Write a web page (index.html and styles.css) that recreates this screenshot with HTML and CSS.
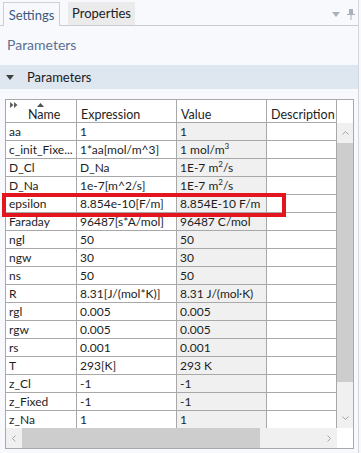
FILE: index.html
```html
<!DOCTYPE html>
<html lang="en">
<head>
    <meta charset="UTF-8">
    <title>Settings - Parameters</title>
    <link rel="stylesheet" href="styles.css">
</head>
<body>
    <div class="panel">
        <div class="tabbar">
            <div class="tab active">Settings</div>
            <div class="tab">Properties</div>
            <div class="tab-tools">
                <svg width="8" height="5" viewBox="0 0 8 5"><path d="M0 0H8L4 5Z" fill="#aab0ba"/></svg>
                <svg width="8" height="11" viewBox="0 0 8 11"><path d="M2 0H6V5H8V6H4.5V11H3.5V6H0V5H2Z" fill="#aab0ba"/></svg>
            </div>
        </div>

        <div class="title">Parameters</div>

        <div class="section">
            <svg class="caret" width="8" height="5" viewBox="0 0 8 5"><path d="M0 0H8L4 5Z" fill="#404040"/></svg>
            Parameters
        </div>

        <div class="grid">
            <div class="grid-main">
                <div class="grid-table">
                    <div class="row head">
                        <div class="cell name-head">
                            <svg class="expand-icon" width="8" height="6" viewBox="0 0 8 6"><path d="M0 0L3.5 3L0 6ZM4 0L7.5 3L4 6Z" fill="#606060"/></svg>
                            <svg class="sort-icon" width="7" height="4" viewBox="0 0 7 4"><path d="M0 4L3.5 0L7 4Z" fill="#505050"/></svg>
                            Name
                        </div>
                        <div class="cell">Expression</div>
                        <div class="cell">Value</div>
                        <div class="cell">Description</div>
                    </div>
                    <div class="row"><div class="cell">aa</div><div class="cell">1</div><div class="cell val">1</div><div class="cell"></div></div>
                    <div class="row"><div class="cell">c_init_Fixe...</div><div class="cell">1*aa[mol/m^3]</div><div class="cell val">1 mol/m<sup>3</sup></div><div class="cell"></div></div>
                    <div class="row"><div class="cell">D_Cl</div><div class="cell">D_Na</div><div class="cell val">1E-7 m<sup>2</sup>/s</div><div class="cell"></div></div>
                    <div class="row"><div class="cell">D_Na</div><div class="cell">1e-7[m^2/s]</div><div class="cell val">1E-7 m<sup>2</sup>/s</div><div class="cell"></div></div>
                    <div class="row"><div class="cell">epsilon</div><div class="cell">8.854e-10[F/m]</div><div class="cell val">8.854E-10 F/m</div><div class="cell"></div></div>
                    <div class="row"><div class="cell">Faraday</div><div class="cell">96487[s*A/mol]</div><div class="cell val">96487 C/mol</div><div class="cell"></div></div>
                    <div class="row"><div class="cell">ngl</div><div class="cell">50</div><div class="cell val">50</div><div class="cell"></div></div>
                    <div class="row"><div class="cell">ngw</div><div class="cell">30</div><div class="cell val">30</div><div class="cell"></div></div>
                    <div class="row"><div class="cell">ns</div><div class="cell">50</div><div class="cell val">50</div><div class="cell"></div></div>
                    <div class="row"><div class="cell">R</div><div class="cell">8.31[J/(mol*K)]</div><div class="cell val">8.31 J/(mol·K)</div><div class="cell"></div></div>
                    <div class="row"><div class="cell">rgl</div><div class="cell">0.005</div><div class="cell val">0.005</div><div class="cell"></div></div>
                    <div class="row"><div class="cell">rgw</div><div class="cell">0.005</div><div class="cell val">0.005</div><div class="cell"></div></div>
                    <div class="row"><div class="cell">rs</div><div class="cell">0.001</div><div class="cell val">0.001</div><div class="cell"></div></div>
                    <div class="row"><div class="cell">T</div><div class="cell">293[K]</div><div class="cell val">293 K</div><div class="cell"></div></div>
                    <div class="row"><div class="cell">z_Cl</div><div class="cell">-1</div><div class="cell val">-1</div><div class="cell"></div></div>
                    <div class="row"><div class="cell">z_Fixed</div><div class="cell">-1</div><div class="cell val">-1</div><div class="cell"></div></div>
                    <div class="row"><div class="cell">z_Na</div><div class="cell">1</div><div class="cell val">1</div><div class="cell"></div></div>
                </div>

                <div class="vscroll">
                    <div class="vs-track">
                        <div class="sb-btn"><svg width="7" height="4" viewBox="0 0 7 4"><path d="M0.5 3.5L3.5 0.5L6.5 3.5" fill="none" stroke="#a6a6a6"/></svg></div>
                        <div class="vs-thumb"></div>
                        <div class="vs-rest"></div>
                        <div class="sb-btn"><svg width="7" height="4" viewBox="0 0 7 4"><path d="M0.5 0.5L3.5 3.5L6.5 0.5" fill="none" stroke="#a6a6a6"/></svg></div>
                    </div>
                </div>
            </div>

            <div class="hscroll">
                <div class="hs-track">
                    <div class="sb-btn h"><svg width="4" height="7" viewBox="0 0 4 7"><path d="M3.5 0.5L0.5 3.5L3.5 6.5" fill="none" stroke="#a6a6a6"/></svg></div>
                    <div class="hs-thumb"></div>
                    <div class="hs-rest"></div>
                    <div class="sb-btn h"><svg width="4" height="7" viewBox="0 0 4 7"><path d="M0.5 0.5L3.5 3.5L0.5 6.5" fill="none" stroke="#a6a6a6"/></svg></div>
                </div>
                <div class="corner"></div>
            </div>
        </div>

        <div class="highlight"></div>
    </div>
</body>
</html>
```

FILE: styles.css
```css
body {
    margin: 0;
    font-family: Lato, "Noto Sans", sans-serif;
    background: #f8f9fd;
    color: #1e1e1e;
}
.panel {
    position: relative;
    width: 358px;
    height: 453px;
    border-right: 1px solid #d3d6dc;
}
.tabbar {
    display: flex;
    align-items: flex-end;
    height: 25px;
    padding-left: 3px;
    border-bottom: 1px solid #c9ccd3;
}
.tab {
    height: 23px;
    width: 67px;
    margin-left: 8px;
    box-sizing: border-box;
    background: #ebebeb;
    font-size: 13px;
    line-height: 23px;
    text-align: center;
    color: #222;
}
.tab.active {
    width: 57px;
    height: 24px;
    margin: 0 0 -1px 0;
    border: 1px solid #cdd0d7;
    border-bottom: none;
    background: #f8f9fd;
    color: #3b5a82;
    line-height: 24px;
}
.tab-tools {
    margin-left: auto;
    align-self: stretch;
    display: flex;
    align-items: center;
    gap: 7px;
    padding: 3px 3px 0 0;
}
.title {
    height: 39px;
    box-sizing: border-box;
    padding: 10px 0 0 7px;
    font-size: 14px;
    line-height: 17px;
    color: #5a7092;
}
.section {
    display: flex;
    align-items: center;
    height: 24px;
    padding-left: 6px;
    background: #dee6f0;
    font-size: 13px;
    color: #1a1a1a;
}
.caret {
    margin-right: 13px;
    margin-top: 1px;
}
.grid {
    width: 349px;
    height: 350px;
    box-sizing: border-box;
    margin: 10px 0 0 5px;
    border: 1px solid #a9a9a9;
    background: #fff;
}
.grid-main {
    display: flex;
    height: 328px;
    overflow: hidden;
}
.grid-table {
    width: 331px;
    flex: none;
}
.row {
    display: grid;
    grid-template-columns: 71px 100px 90px 70px;
    height: 18px;
}
.cell {
    box-sizing: border-box;
    border-right: 1px solid #a8a8a8;
    border-bottom: 1px solid #a8a8a8;
    padding-left: 3px;
    font-size: 12px;
    line-height: 17px;
    white-space: nowrap;
    overflow: hidden;
    background: #fff;
}
.cell.val {
    background: #f0f0f0;
}
.cell sup {
    font-size: 8px;
    line-height: 0;
    vertical-align: 5px;
}
.row.head {
    height: 23px;
}
.head .cell {
    padding: 6px 0 0 4px;
    font-size: 12.5px;
}
.head .cell.name-head {
    position: relative;
    padding-left: 22px;
}
.expand-icon {
    position: absolute;
    left: 4px;
    top: 2px;
}
.sort-icon {
    position: absolute;
    left: 31px;
    top: 3px;
}
.vscroll {
    flex: 1;
    padding-top: 23px;
    display: flex;
    flex-direction: column;
}
.vs-track {
    flex: 1;
    display: flex;
    flex-direction: column;
    background: #f0f0f0;
}
.sb-btn {
    display: flex;
    align-items: center;
    justify-content: center;
    height: 20px;
    flex: none;
}
.sb-btn.h {
    height: auto;
    width: 16px;
}
.vs-thumb {
    height: 239px;
    background: #cdcdcd;
}
.vs-rest {
    flex: 1;
}
.hscroll {
    display: flex;
    height: 20px;
}
.hs-track {
    width: 331px;
    display: flex;
    background: #f0f0f0;
}
.hs-thumb {
    width: 238px;
    background: #cdcdcd;
}
.hs-rest {
    flex: 1;
}
.corner {
    flex: 1;
    background: #fff;
}
.highlight {
    position: absolute;
    left: 2px;
    top: 193px;
    width: 284px;
    height: 24px;
    box-sizing: border-box;
    border: 4px solid #e3161f;
}
```
